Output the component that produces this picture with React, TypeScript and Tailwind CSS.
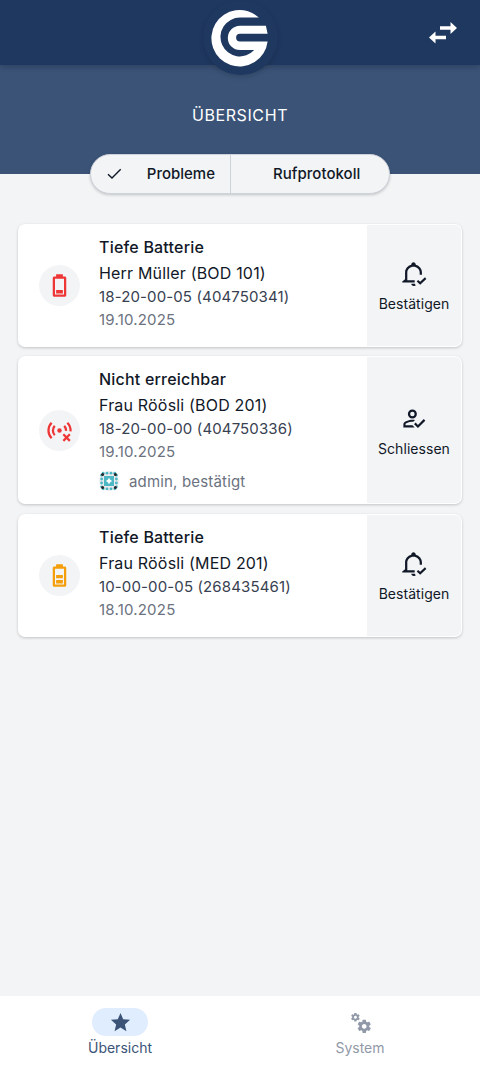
import type { ReactNode } from "react";
import clsx from "clsx";

type IconProps = {
  d: string;
  className?: string;
};

function Icon({ d, className }: IconProps) {
  return (
    <svg viewBox="0 0 24 24" fill="currentColor" className={className}>
      <path d={d} />
    </svg>
  );
}

const BATTERY =
  "M16 20H8V6H16M16.67 4H15V2H9V4H7.33C6.6 4 6 4.6 6 5.33V20.67C6 21.4 6.6 22 7.33 22H16.67C17.41 22 18 21.41 18 20.67V5.33C18 4.6 17.4 4 16.67 4M15 16H9V19H15V16";
const BATTERY_MEDIUM = BATTERY + "M15 11.5H9V14.5H15V11.5";
const ACCOUNT_CHECK =
  "M21.1,12.5L22.5,13.91L15.97,20.5L12.5,17L13.9,15.59L15.97,17.67L21.1,12.5M11,4A4,4 0 0,1 15,8A4,4 0 0,1 11,12A4,4 0 0,1 7,8A4,4 0 0,1 11,4M11,6A2,2 0 0,0 9,8A2,2 0 0,0 11,10A2,2 0 0,0 13,8A2,2 0 0,0 11,6M11,13C11.68,13 12.5,13.09 13.41,13.26L11.74,14.93L11,14.9C8.03,14.9 4.9,16.36 4.9,17V18.1H11.1L13,20H3V17C3,14.34 8.33,13 11,13Z";
const BELL_CHECK =
  "M10 21H13.3C13.4 21.7 13.7 22.3 14 22.7C13.5 23 12.8 23.1 12.2 23C11 22.9 10 22.1 10 21M2 20V19L4.5 17V11C4.5 7.9 6.8 5.2 10 4.3V4C10 2.9 10.9 2 12 2S14 2.9 14 4V4.3C17.2 5.2 19.5 7.9 19.5 11V13H17.5V11C17.5 8.2 15 6 12 6S6.5 8.2 6.5 11V18H13.1L13 20ZM22.2 15.4L23.4 16.8L17.9 21.9L14.9 19.1L16.1 17.7L17.9 19.3L22.2 15.4Z";
const STAR =
  "M12,17.27L18.18,21L16.54,13.97L22,9.24L14.81,8.62L12,2L9.19,8.62L2,9.24L7.45,13.97L5.82,21L12,17.27Z";
const COGS =
  "M15.9,18.45C17.25,18.45 18.35,17.35 18.35,16C18.35,14.65 17.25,13.55 15.9,13.55C14.54,13.55 13.45,14.65 13.45,16C13.45,17.35 14.54,18.45 15.9,18.45M21.1,16.68L22.58,17.84C22.71,17.95 22.75,18.13 22.66,18.29L21.26,20.71C21.17,20.86 21,20.92 20.83,20.86L19.09,20.16C18.73,20.44 18.33,20.67 17.91,20.85L17.64,22.7C17.62,22.87 17.47,23 17.3,23H14.5C14.32,23 14.18,22.87 14.15,22.7L13.89,20.85C13.46,20.67 13.07,20.44 12.71,20.16L10.96,20.86C10.81,20.92 10.62,20.86 10.54,20.71L9.14,18.29C9.05,18.13 9.09,17.95 9.22,17.84L10.7,16.68L10.65,16L10.7,15.31L9.22,14.16C9.09,14.05 9.05,13.86 9.14,13.71L10.54,11.29C10.62,11.13 10.81,11.07 10.96,11.13L12.71,11.84C13.07,11.56 13.46,11.32 13.89,11.15L14.15,9.29C14.18,9.13 14.32,9 14.5,9H17.3C17.47,9 17.62,9.13 17.64,9.29L17.91,11.15C18.33,11.32 18.73,11.56 19.09,11.84L20.83,11.13C21,11.07 21.17,11.13 21.26,11.29L22.66,13.71C22.75,13.86 22.71,14.05 22.58,14.16L21.1,15.31L21.15,16L21.1,16.68M6.69,8.07C7.56,8.07 8.26,7.37 8.26,6.5C8.26,5.63 7.56,4.92 6.69,4.92A1.58,1.58 0 0,0 5.11,6.5C5.11,7.37 5.82,8.07 6.69,8.07M10.03,6.94L11,7.68C11.07,7.75 11.09,7.87 11.03,7.97L10.13,9.53C10.08,9.63 9.96,9.67 9.86,9.63L8.74,9.18L8,9.62L7.81,10.81C7.79,10.92 7.7,11 7.59,11H5.79C5.67,11 5.58,10.92 5.56,10.81L5.4,9.62L4.64,9.18L3.5,9.63C3.41,9.67 3.3,9.63 3.24,9.53L2.34,7.97C2.28,7.87 2.31,7.75 2.39,7.68L3.34,6.94L3.31,6.5L3.34,6.06L2.39,5.32C2.31,5.25 2.28,5.13 2.34,5.03L3.24,3.47C3.3,3.37 3.41,3.33 3.5,3.37L4.63,3.82L5.4,3.38L5.56,2.19C5.58,2.08 5.67,2 5.79,2H7.59C7.7,2 7.79,2.08 7.81,2.19L8,3.38L8.74,3.82L9.86,3.37C9.96,3.33 10.08,3.37 10.13,3.47L11.03,5.03C11.09,5.13 11.07,5.25 11,5.32L10.03,6.06L10.06,6.5L10.03,6.94Z";

function SignalLost() {
  return (
    <svg viewBox="0 0 24 24" className="size-[27px] text-[#ef3636]" fill="none" stroke="currentColor" strokeWidth="2">
      <path d="M5 5.1A9.9 9.9 0 0 0 5 18.9M7.8 7.9A5.9 5.9 0 0 0 7.8 16.1M16.2 7.9A5.9 5.9 0 0 1 17.8 12.4M19 5.1A9.9 9.9 0 0 1 21.8 12.8" />
      <circle cx="12" cy="12" r="2" fill="currentColor" stroke="none" />
      <path d="M15.4 15.4L21.2 21.2M21.2 15.4L15.4 21.2" />
    </svg>
  );
}

function Logo() {
  return (
    <svg viewBox="0 0 58 58" className="size-[58px]">
      <path
        d="M47.8 8.6A28.2 28.2 0 1 0 56.6 32.5H29A3.9 3.9 0 0 1 29 24.7H56.6L54.9 16.7H29A12.2 12.2 0 0 0 29 41.1H43.2A19.4 19.4 0 1 1 29 8.6Z"
        fill="#fff"
      />
    </svg>
  );
}

// generated avatar of the user who confirmed the message
function Avatar() {
  const dots = [4.2, 8, 12, 15.8];
  return (
    <svg viewBox="0 0 20 20" className="size-5">
      <circle cx="10" cy="10" r="10" fill="#ececef" />
      <g fill="#4db7c3">
        <rect x="5" y="5" width="10" height="10" />
        {dots.map((p) => (
          <g key={p}>
            <circle cx={p} cy="2.2" r="1.4" />
            <circle cx={p} cy="17.8" r="1.4" />
            <circle cx="2.6" cy={p} r="1.4" />
            <circle cx="17.4" cy={p} r="1.4" />
          </g>
        ))}
      </g>
      <g fill="#25272b">
        <circle cx="3.6" cy="3.6" r="1.5" />
        <circle cx="16.4" cy="3.6" r="1.5" />
        <circle cx="3.6" cy="16.4" r="1.5" />
        <circle cx="16.4" cy="16.4" r="1.5" />
      </g>
      <path d="M10 6.8L11.2 8.8L13.2 10L11.2 11.2L10 13.2L8.8 11.2L6.8 10L8.8 8.8Z" fill="#fff" />
    </svg>
  );
}

type ProblemCardProps = {
  icon: ReactNode;
  title: string;
  person: string;
  device: string;
  date: string;
  note?: string;
  actionIcon: string;
  actionLabel: string;
};

function ProblemCard({ icon, title, person, device, date, note, actionIcon, actionLabel }: ProblemCardProps) {
  return (
    <article
      className={clsx(
        "flex rounded-[7px] bg-white p-px shadow-[0_1px_3px_rgba(0,0,0,0.2)]",
        note ? "h-[148px]" : "h-[122.5px]",
      )}
    >
      <div className="flex w-[80px] shrink-0 items-center pl-[19.5px]">
        <div className="flex size-[41.5px] items-center justify-center rounded-full bg-[#f3f4f6]">{icon}</div>
      </div>
      <div className="flex flex-1 flex-col pt-[10px] text-[16px] whitespace-nowrap">
        <h2 className="h-[25px] leading-6 font-medium tracking-[0.2px] text-[#111827]">{title}</h2>
        <p className="h-6 leading-[26px] tracking-[0.18px] text-[#111827]">{person}</p>
        <p className="h-6 text-[15px] leading-[25px] tracking-[0.13px] text-[#374151]">{device}</p>
        <p className="h-6 text-[15px] leading-6 tracking-[0.2px] text-[#6b7280]">{date}</p>
        {note ? (
          <div className="mt-[7px] flex h-5 items-center gap-2.5 text-[15px] tracking-[0.17px] text-[#6b7280]">
            <Avatar />
            <span className="pt-px">{note}</span>
          </div>
        ) : null}
      </div>
      <button className="flex w-[94px] flex-col items-center justify-center gap-1 rounded-r-[6px] bg-[#f3f4f6] pt-1.5 text-[#111827]">
        <Icon d={actionIcon} className="mr-0.5 size-[27px]" />
        <span className="pt-px text-[14px] leading-6 tracking-[0.05px]">{actionLabel}</span>
      </button>
    </article>
  );
}

export default function App() {
  return (
    <div className="flex h-[1066px] w-[480px] flex-col bg-[#f3f4f6] font-['Inter',sans-serif]">
      <header className="relative z-10 flex h-[65px] items-center justify-end bg-[#1f3860] pr-[22px] shadow-[0_2px_6px_rgba(0,0,0,0.2)]">
        <div className="absolute top-0 left-[202.5px] flex size-[75px] items-center justify-center rounded-full bg-[#1f3860] shadow-[0_2px_5px_rgba(0,0,0,0.15)]">
          <Logo />
        </div>
        <svg viewBox="0 0 30 24" className="h-6 w-[30px]" fill="#fff">
          <path d="M12 5.2H22.5V1L29 7L22.5 13V8.8H12ZM18 14.7H7.5V10.5L1 16.5L7.5 22.5V18.3H18Z" />
        </svg>
      </header>

      <section className="flex h-[108.5px] shrink-0 flex-col items-center bg-[#3a5377]">
        <h1 className="mt-[38px] text-[16px] leading-6 tracking-[0.6px] text-white">ÜBERSICHT</h1>
        <nav className="mt-[26.5px] flex h-10 w-[300px] shrink-0 rounded-full border border-[#cdd1da] bg-[#f3f4f6] text-[15px] font-medium text-[#111827] shadow-[0_1px_3px_rgba(0,0,0,0.2)]">
          <button className="flex w-[140px] items-center justify-between border-r border-[#cdd1da] pt-px pr-[15px] pl-4">
            <svg viewBox="0 0 16 16" className="size-4" fill="none" stroke="currentColor" strokeWidth="1.4">
              <path d="M1 8.2L5 12L13.7 3.3" />
            </svg>
            Probleme
          </button>
          <button className="flex flex-1 items-center pt-px pl-[42px] tracking-[0.03px]">Rufprotokoll</button>
        </nav>
      </section>

      <main className="flex flex-1 flex-col gap-[9.75px] px-[18px] pt-[50.5px]">
        <ProblemCard
          icon={<Icon d={BATTERY} className="size-[27px] text-[#ef3636]" />}
          title="Tiefe Batterie"
          person="Herr Müller (BOD 101)"
          device="18-20-00-05 (404750341)"
          date="19.10.2025"
          actionIcon={BELL_CHECK}
          actionLabel="Bestätigen"
        />
        <ProblemCard
          icon={<SignalLost />}
          title="Nicht erreichbar"
          person="Frau Röösli (BOD 201)"
          device="18-20-00-00 (404750336)"
          date="19.10.2025"
          note="admin, bestätigt"
          actionIcon={ACCOUNT_CHECK}
          actionLabel="Schliessen"
        />
        <ProblemCard
          icon={<Icon d={BATTERY_MEDIUM} className="size-[27px] text-[#f59e0b]" />}
          title="Tiefe Batterie"
          person="Frau Röösli (MED 201)"
          device="10-00-00-05 (268435461)"
          date="18.10.2025"
          actionIcon={BELL_CHECK}
          actionLabel="Bestätigen"
        />
      </main>

      <footer className="flex h-[70px] bg-white text-[14px] leading-6">
        <a className="flex flex-1 flex-col items-center pt-3 text-[#3a5377]">
          <span className="flex h-7 w-14 items-center justify-center rounded-full bg-[#e0edff]">
            <Icon d={STAR} className="size-[23px]" />
          </span>
          Übersicht
        </a>
        <a className="flex flex-1 flex-col items-center pt-3 text-[#9199a8]">
          <span className="flex h-7 w-14 items-center justify-center">
            <Icon d={COGS} className="size-[23px]" />
          </span>
          System
        </a>
      </footer>
    </div>
  );
}
